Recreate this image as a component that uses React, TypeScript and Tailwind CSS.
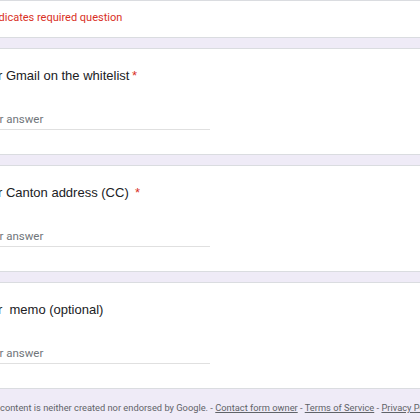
import React from "react";

const Question = ({ title, required, gap }: { title: string; required?: boolean; gap?: string }) => (
  <div className="w-full bg-white border-y border-[#dadce0] h-[107px]">
    <div className="pt-[19px]">
      <div className="ml-[-24px] h-[16px] leading-[16px] text-[13px] text-[#202124] whitespace-pre" style={{ fontFamily: '"Liberation Sans", Arial, sans-serif' }}>
        {title}
        {required && <span className={`text-[#d93025] ${gap ?? "ml-[-1px]"}`}>*</span>}
      </div>
      <div className="ml-[-22px] mt-[28px] w-[232px] border-b border-[#e0e0e0] pb-[3px] h-[18px] leading-[14px] text-[11.5px] text-[#70757a] font-['Roboto',sans-serif]">
        <span className="ml-[2px]">Your answer</span>
      </div>
    </div>
  </div>
);

export default function App() {
  return (
    <div className="w-[420px] h-[420px] overflow-hidden bg-[#efebf7] font-['Roboto',sans-serif]">
      <div className="w-full bg-white border-y border-[#dadce0] h-[38px]">
        <div className="ml-[-18px] pt-[9px] leading-[15px] text-[11px] text-[#d93025] whitespace-nowrap">
          * Indicates required question
        </div>
      </div>
      <div className="h-[10px]" />
      <Question title="Your Gmail on the whitelist " required />
      <div className="h-[10px]" />
      <Question title="Your Canton address (CC)  " required gap="ml-[-1px]" />
      <div className="h-[10px]" />
      <Question title="Your  memo (optional)" />
      <div className="pt-[13px] ml-[-20px] whitespace-nowrap text-[9.3px] leading-[12px] text-[#5f6368]">
        This content is neither created nor endorsed by Google. - <span className="underline">Contact form owner</span> - <span className="underline">Terms of Service</span> - <span className="underline">Privacy Policy</span>
      </div>
    </div>
  );
}
